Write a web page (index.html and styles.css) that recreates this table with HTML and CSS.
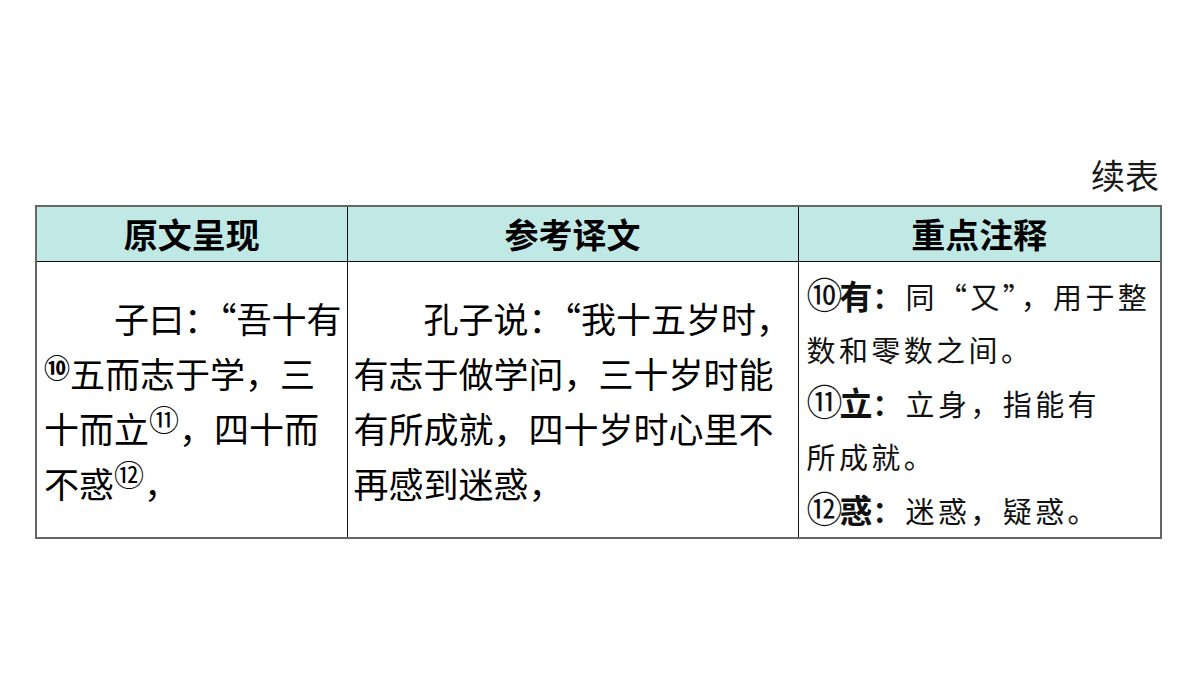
FILE: index.html
```html
<!DOCTYPE html>
<html lang="zh-CN">
<head>
<meta charset="utf-8">
<title>续表</title>
<link rel="stylesheet" href="styles.css">
</head>
<body>
<div class="page">
  <div class="caption">续表</div>
  <table class="notes">
    <colgroup>
      <col class="c1">
      <col class="c2">
      <col class="c3">
    </colgroup>
    <thead>
      <tr>
        <th>原文呈现</th>
        <th>参考译文</th>
        <th>重点注释</th>
      </tr>
    </thead>
    <tbody>
      <tr>
        <td class="orig"><span class="indent"></span>子曰：“吾十有<br><sup class="sn sn-fill">⑩</sup>五而志于学，三<br>十而立<sup class="sn">⑪</sup>，四十而<br>不惑<sup class="sn">⑫</sup>，</td>
        <td class="trans"><span class="indent"></span>孔子说：“我十五岁时，<br>有志于做学问，三十岁时能<br>有所成就，四十岁时心里不<br>再感到迷惑，</td>
        <td class="note">
          <div class="nl"><span class="num">⑩</span><b class="key">有</b><b class="colon">：</b>同“又”，用于整</div>
          <div class="nl">数和零数之间。</div>
          <div class="nl"><span class="num">⑪</span><b class="key">立</b><b class="colon">：</b>立身，指能有</div>
          <div class="nl">所成就。</div>
          <div class="nl"><span class="num">⑫</span><b class="key">惑</b><b class="colon">：</b>迷惑，疑惑。</div>
        </td>
      </tr>
    </tbody>
  </table>
</div>
</body>
</html>
```
FILE: styles.css
```css
html, body {
  margin: 0;
  padding: 0;
  background: #ffffff;
}
body {
  width: 1200px;
  height: 675px;
  overflow: hidden;
  font-family: "Noto Sans CJK SC", "Noto Sans", sans-serif;
  color: #000;
}
.page {
  display: flex;
  flex-direction: column;
  padding: 155px 40px 0 35px;
}
.caption {
  align-self: flex-end;
  font-size: 34px;
  line-height: 40px;
  color: #1a1a1a;
  margin-right: 1px;
}
.notes {
  margin-top: 10px;
  width: 1125px;
  table-layout: fixed;
  border-collapse: collapse;
  border: 2px solid #666;
}
.c1 { width: 311px; }
.c2 { width: 451px; }
.c3 { width: 363px; }
.notes th {
  background: #c0e9e6;
  font-size: 34px;
  font-weight: 700;
  line-height: 54px;
  height: 54px;
  padding: 0;
  text-align: center;
  border: 1px solid #111;
  border-top: 2px solid #666;
}
.notes th:first-child { border-left: 2px solid #666; }
.notes th:last-child { border-right: 2px solid #666; }
.notes td {
  border: 1px solid #111;
  border-bottom: 2px solid #666;
  vertical-align: middle;
  padding: 0;
}
.notes td:first-child { border-left: 2px solid #666; }
.notes td:last-child { border-right: 2px solid #666; }
.orig, .trans {
  font-size: 35px;
  line-height: 55px;
  white-space: nowrap;
}
.orig { padding-left: 7px !important; }
.trans { padding-left: 6px !important; }
.indent {
  display: inline-block;
  width: 70px;
}
.sn {
  font-family: "Noto Sans CJK SC", sans-serif;
  font-size: 30px;
  line-height: 0;
  vertical-align: 12px;
  font-weight: 400;
}
.sn-fill {
  font-size: 26px;
  font-weight: 700;
  vertical-align: 10px;
}
.note {
  vertical-align: top !important;
  padding: 7px 0 0 8px !important;
}
.nl {
  font-size: 29px;
  line-height: 53px;
  letter-spacing: 3.4px;
  white-space: nowrap;
  color: #111;
}
.num {
  font-family: "Noto Sans CJK SC", sans-serif;
  font-size: 36px;
  letter-spacing: -3px;
  line-height: 0;
}
.key {
  font-size: 33px;
  font-weight: 700;
  letter-spacing: 0;
}
.colon {
  font-weight: 700;
  letter-spacing: 0;
  margin-right: 4px;
}
```
